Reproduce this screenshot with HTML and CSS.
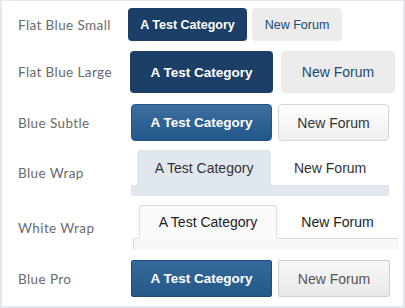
FILE: index.html
```html
<!DOCTYPE html>
<html lang="en">
<head>
  <meta charset="UTF-8">
  <title>Forum tab styles</title>
  <link rel="stylesheet" href="styles.css">
</head>
<body>

  <div class="frame">

    <div class="row row-small">
      <span class="label">Flat Blue Small</span>
      <div class="btns">
        <a class="btn flat-blue">A Test Category</a>
        <a class="btn flat-grey">New Forum</a>
      </div>
    </div>

    <div class="row row-large">
      <span class="label">Flat Blue Large</span>
      <div class="btns">
        <a class="btn flat-blue">A Test Category</a>
        <a class="btn flat-grey">New Forum</a>
      </div>
    </div>

    <div class="row row-subtle">
      <span class="label">Blue Subtle</span>
      <div class="btns">
        <a class="btn subtle-blue">A Test Category</a>
        <a class="btn subtle-white">New Forum</a>
      </div>
    </div>

    <div class="row row-bluewrap">
      <span class="label">Blue Wrap</span>
      <div class="wrap blue-wrap">
        <div class="tabs">
          <a class="tab active">A Test Category</a>
          <a class="tab">New Forum</a>
        </div>
        <div class="bar"></div>
      </div>
    </div>

    <div class="row row-whitewrap">
      <span class="label">White Wrap</span>
      <div class="wrap white-wrap">
        <div class="tabs">
          <a class="tab active">A Test Category</a>
          <a class="tab">New Forum</a>
        </div>
        <div class="bar"></div>
      </div>
    </div>

    <div class="row row-pro">
      <span class="label">Blue Pro</span>
      <div class="btns">
        <a class="btn pro-blue">A Test Category</a>
        <a class="btn pro-grey">New Forum</a>
      </div>
    </div>

  </div>

</body>
</html>
```

FILE: styles.css
```css
body {
  margin: 0;
  background: #fff;
  font-family: "Liberation Sans", Arial, sans-serif;
}

.frame {
  box-sizing: border-box;
  width: 405px;
  height: 308px;
  border: 2px solid #e2e8ee;
  border-top-width: 1px;
  padding-top: 7px;
  display: flex;
  flex-direction: column;
}

.row {
  display: flex;
  align-items: center;
}

.label {
  width: 112px;
  padding-left: 16px;
  flex-shrink: 0;
  font-family: Lato, "Open Sans", sans-serif;
  font-size: 13.5px;
  letter-spacing: 0.4px;
  color: #6a6a6a;
}

.btns {
  display: flex;
}

.btn {
  box-sizing: border-box;
  display: flex;
  align-items: center;
  justify-content: center;
  text-decoration: none;
  white-space: nowrap;
}

/* flat */
.flat-blue {
  background: #1b3f66;
  color: #fff;
  font-weight: bold;
  border-radius: 4px;
}

.flat-grey {
  background: #ececec;
  color: #204a74;
  border-radius: 4px;
}

.row-small .btns {
  margin-left: -2px;
  gap: 5px;
}

.row-small .btn {
  height: 33px;
  font-size: 12.5px;
}

.row-small .flat-blue { width: 119px; font-size: 12.5px; }
.row-small .flat-grey { width: 90px; }

.row-large {
  margin-top: 10px;
}

.row-large .btns {
  gap: 8px;
}

.row-large .btn {
  height: 42px;
  font-size: 14px;
}

.row-large .flat-blue { width: 143px; font-size: 13.5px; }
.row-large .flat-grey { width: 114px; }

/* subtle */
.row-subtle {
  margin-top: 11px;
}

.row-subtle .btns,
.row-pro .btns {
  margin-left: 1px;
  gap: 6px;
}

.row-subtle .btn,
.row-pro .btn {
  height: 37px;
  font-size: 14px;
}

.subtle-blue {
  width: 141px;
  background: linear-gradient(#3d6f9f, #22568a);
  border: 1px solid #245282;
  border-radius: 4px;
  color: #fff;
  font-weight: bold;
  font-size: 13.5px !important;
}

.subtle-white {
  width: 111px;
  background: linear-gradient(#fff, #eeeeee);
  border: 1px solid #d4d4d4;
  border-radius: 4px;
  color: #333;
}

/* wraps */
.wrap {
  display: flex;
  flex-direction: column;
}

.tabs {
  display: flex;
  padding-left: 6px;
}

.tab {
  box-sizing: border-box;
  display: flex;
  align-items: center;
  justify-content: center;
  width: 139px;
  font-size: 14px;
  white-space: nowrap;
}

.tab + .tab {
  width: 122px;
}

.bar {
  height: 11px;
}

.row-bluewrap {
  margin-top: 9px;
}

.blue-wrap {
  margin-left: 1px;
  width: 258px;
}

.blue-wrap .tab {
  height: 35px;
  color: #333;
}

.blue-wrap .tab.active {
  background: #e1e7ef;
  border-radius: 4px 4px 0 0;
}

.blue-wrap .bar {
  background: #e1e7ef;
}

.row-whitewrap {
  margin-top: 9px;
}

.white-wrap {
  margin-left: 3px;
  width: 265px;
}

.white-wrap .tab {
  height: 34px;
  color: #222;
  border-bottom: 1px solid #dcdcdc;
}

.white-wrap .tab.active {
  background: #fafafa;
  border: 1px solid #dcdcdc;
  border-bottom-color: #fafafa;
  border-radius: 4px 4px 0 0;
}

.white-wrap .tabs::before {
  content: "";
  width: 6px;
  margin-left: -6px;
  border-bottom: 1px solid #dcdcdc;
}

.white-wrap .bar {
  background: #f7f7f7;
  border-left: 1px solid #dcdcdc;
}

/* pro */
.row-pro {
  margin-top: 10px;
}

.pro-blue {
  width: 141px;
  background: linear-gradient(#36699b, #235888);
  border: 1px solid #1f4b78;
  border-radius: 2px;
  color: #fff;
  font-weight: bold;
  font-size: 13.5px !important;
}

.pro-grey {
  width: 112px;
  background: linear-gradient(#f8f8f8, #e8e8e8);
  border: 1px solid #cfcfcf;
  border-radius: 2px;
  color: #555;
}
```
